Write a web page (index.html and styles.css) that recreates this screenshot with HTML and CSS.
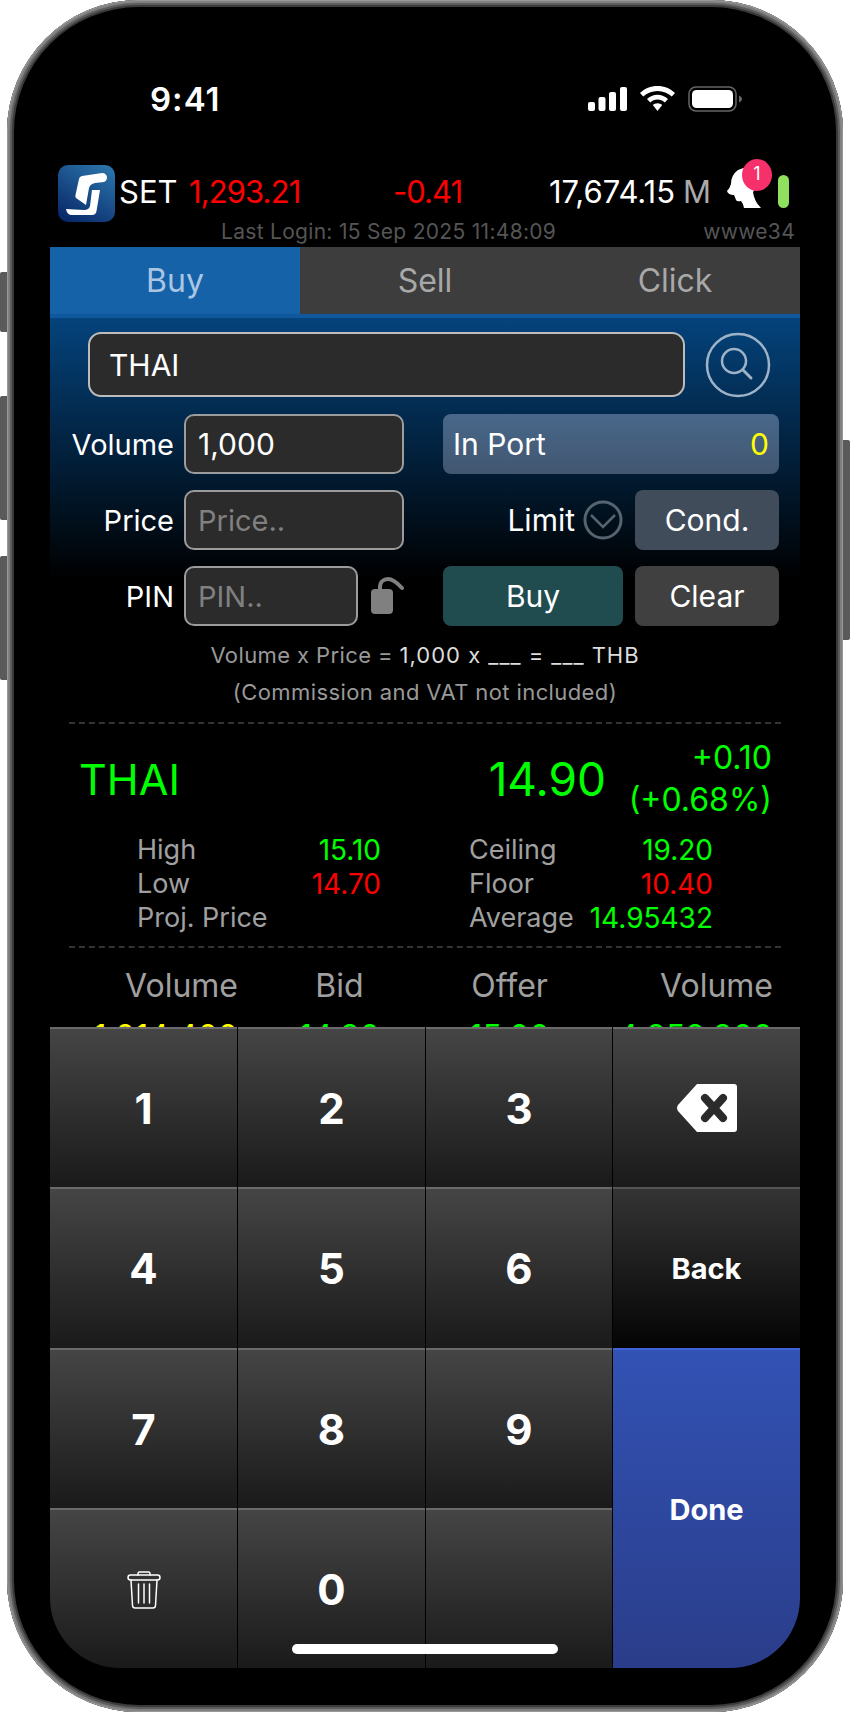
FILE: index.html
```html
<!DOCTYPE html>
<html lang="en">
<head>
  <meta charset="UTF-8">
  <title>Buy - THAI</title>
  <link rel="stylesheet" href="styles.css">
</head>
<body>

<div class="phone">
  <span class="side-btn btn-mute"></span>
  <span class="side-btn btn-up"></span>
  <span class="side-btn btn-down"></span>
  <span class="side-btn btn-power"></span>

  <div class="screen">

    <div class="statusbar">
      <span class="clock">9:41</span>
      <div class="status-icons">
        <svg class="ic-signal" viewBox="0 0 39 24"><rect x="0" y="15" width="7" height="9" rx="2"/><rect x="10.500" y="10" width="7" height="14" rx="2"/><rect x="21" y="5" width="7" height="19" rx="2"/><rect x="32" y="0" width="7" height="24" rx="2"/></svg>
        <svg class="ic-wifi" viewBox="0 0 35 25"><path d="M17.500 0C24.300 0 30.300 2.600 35 7L31.800 10.500C28 7 23 4.900 17.500 4.900S7 7 3.200 10.500L0 7C4.700 2.600 10.700 0 17.500 0Z"/><path d="M17.500 8.800C21.600 8.800 25.200 10.400 28 13L24.800 16.400C22.800 14.600 20.300 13.500 17.500 13.500S12.200 14.600 10.200 16.400L7 13C9.800 10.400 13.400 8.800 17.500 8.800Z"/><path d="M17.500 17.200C19.300 17.200 21 17.900 22.200 19.100L17.500 25L12.800 19.100C14 17.900 15.700 17.200 17.500 17.200Z"/></svg>
        <svg class="ic-battery" viewBox="0 0 54 26"><rect x="1" y="1" width="47" height="24" rx="7" fill="none" stroke="#666" stroke-width="1.500"/><rect x="4" y="4" width="41" height="18" rx="4.500" fill="#fff"/><path d="M51 9.500C53 10.200 54 11.500 54 13S53 15.800 51 16.500Z" fill="#666"/></svg>
      </div>
    </div>

    <div class="ticker">
      <svg class="logo" viewBox="0 0 57 57">
        <defs>
          <linearGradient id="logoBg" x1="0.800" y1="0" x2="0.200" y2="1">
            <stop offset="0" stop-color="#2a72a8"/>
            <stop offset="1" stop-color="#08296a"/>
          </linearGradient>
        </defs>
        <rect width="57" height="57" rx="10" fill="url(#logoBg)"/>
        <path d="M21 14Q21.500 11.500 24 11L44 8Q48 8 49 12Q49 16 46 17L37 18Q32 19 31 23L28 40L18 33Q17 32 17.500 30Z" fill="#fff"/>
        <path d="M34 25H42L38.500 46Q38 50 34 50H14Q9 50 8 44L26 45Q31 45 32 41Z" fill="#fff"/>
      </svg>
      <span class="tk-name">SET</span>
      <span class="tk-index red">1,293.21</span>
      <span class="tk-change red">-0.41</span>
      <span class="tk-value">17,674.15</span>
      <span class="tk-unit">M</span>
      <div class="tk-head">
        <svg viewBox="0 0 38 42"><path d="M1 24Q4 21 5 17Q5 8 12 3L20 0H30L33 8Q34 18 27 25Q28 34 35 41H18Q17 36 15 34Q11 35 10 33Q9 30 8 28Q2 28 1 24Z" fill="#fff"/></svg>
        <span class="badge">1</span>
      </div>
      <span class="tk-pill"></span>
    </div>

    <div class="loginbar">
      <span>Last Login: 15 Sep 2025 11:48:09</span>
      <span>wwwe34</span>
    </div>

    <div class="tabs">
      <div class="tab tab-on">Buy</div>
      <div class="tab">Sell</div>
      <div class="tab">Click</div>
    </div>

    <div class="order">
      <div class="search-row">
        <div class="field field-search">THAI</div>
        <svg class="ic-search" viewBox="0 0 66 66"><circle cx="33" cy="33" r="31" fill="none" stroke="#9fb3c8" stroke-width="2.500"/><circle cx="29" cy="29" r="12" fill="none" stroke="#9fb3c8" stroke-width="2.500"/><path d="M38 38L46 46" stroke="#9fb3c8" stroke-width="3" stroke-linecap="round"/></svg>
      </div>

      <div class="form-row">
        <div class="form-left">
          <label class="form-label">Volume</label>
          <div class="field field-input">1,000</div>
        </div>
        <div class="inport"><span>In Port</span><span class="yellow">0</span></div>
      </div>

      <div class="form-row">
        <div class="form-left">
          <label class="form-label">Price</label>
          <div class="field field-input hint">Price..</div>
        </div>
        <div class="form-right">
          <div class="limit">
            <span>Limit</span>
            <svg class="ic-chevron" viewBox="0 0 40 40"><circle cx="20" cy="20" r="18" fill="none" stroke="#56646f" stroke-width="3"/><path d="M8 15L20 27L32 15" fill="none" stroke="#56646f" stroke-width="2.500"/></svg>
          </div>
          <div class="btn btn-cond">Cond.</div>
        </div>
      </div>

      <div class="form-row">
        <div class="form-left">
          <label class="form-label">PIN</label>
          <div class="field field-pin hint">PIN..</div>
          <svg class="ic-lock" viewBox="0 0 35 37"><rect x="1" y="12" width="22" height="25" rx="4" fill="#808080"/><path d="M10 13V10C10 5 13.500 2 18 2S26 4.500 32 11" fill="none" stroke="#808080" stroke-width="4" stroke-linecap="round"/></svg>
        </div>
        <div class="form-right">
          <div class="btn btn-buy">Buy</div>
          <div class="btn btn-clear">Clear</div>
        </div>
      </div>

      <p class="calc">Volume x Price = <span class="calc-val">1,000 x ___ = ___ THB</span></p>
      <p class="calc calc-note">(Commission and VAT not included)</p>
    </div>

    <div class="quote">
      <div class="quote-main">
        <span class="q-symbol">THAI</span>
        <span class="q-price">14.90</span>
        <span class="q-change">+0.10<br>(+0.68%)</span>
      </div>
      <div class="stats">
        <div class="stat-col">
          <span class="st-label">High</span><span class="st-val green">15.10</span>
          <span class="st-label">Low</span><span class="st-val red">14.70</span>
          <span class="st-label">Proj. Price</span><span class="st-val"></span>
        </div>
        <div class="stat-col">
          <span class="st-label">Ceiling</span><span class="st-val green">19.20</span>
          <span class="st-label">Floor</span><span class="st-val red">10.40</span>
          <span class="st-label">Average</span><span class="st-val green">14.95432</span>
        </div>
      </div>
    </div>

    <div class="book">
      <div class="book-row book-head">
        <span class="b-vol">Volume</span><span class="b-mid">Bid</span><span class="b-mid">Offer</span><span class="b-vol">Volume</span>
      </div>
      <div class="book-row book-first">
        <span class="b-vol yellow">1,014,400</span><span class="b-mid green">14.80</span><span class="b-mid green">15.00</span><span class="b-vol green">4,258,800</span>
      </div>
    </div>

    <div class="keypad">
      <div class="key">1</div>
      <div class="key">2</div>
      <div class="key">3</div>
      <div class="key">
        <svg class="ic-back" viewBox="0 0 62 50"><path d="M21 1H58Q61 1 61 4V46Q61 49 58 49H21L2 28Q0 25 2 22Z" fill="#fff"/><path d="M29 15L47 35M47 15L29 35" stroke="#2b2b2b" stroke-width="8" stroke-linecap="round"/></svg>
      </div>
      <div class="key">4</div>
      <div class="key">5</div>
      <div class="key">6</div>
      <div class="key key-back">Back</div>
      <div class="key">7</div>
      <div class="key">8</div>
      <div class="key">9</div>
      <div class="key key-done">Done</div>
      <div class="key">
        <svg class="ic-trash" viewBox="0 0 34 38" fill="none" stroke="#fff" stroke-width="1.500" stroke-linecap="round" stroke-linejoin="round"><path d="M11 4V2.500Q11 1 12.500 1H21.500Q23 1 23 2.500V4"/><rect x="1" y="4" width="32" height="5" rx="2.500"/><path d="M4 9L5.500 34.500Q5.700 37 8 37H26Q28.300 37 28.500 34.500L30 9"/><path d="M11.500 13V32M17 13V32M22.500 13V32"/></svg>
      </div>
      <div class="key">0</div>
      <div class="key"></div>
    </div>

    <span class="home-bar"></span>
  </div>
</div>

</body>
</html>
```

FILE: styles.css
```css
* {
  box-sizing: border-box;
}

body {
  margin: 0;
  background: #fff;
  font-family: Inter, "Liberation Sans", sans-serif;
  font-weight: 400;
  color: #fff;
}

.red { color: #f00; }
.green { color: #0f0; }
.yellow { color: #ff0; }

.phone {
  position: relative;
  width: 850px;
  height: 1712px;
  padding: 0 50px;
}

.phone::before {
  content: "";
  position: absolute;
  left: 7px;
  right: 7px;
  top: 0;
  bottom: 0;
  border-radius: 132px;
  background: #000;
  box-shadow: inset 0 0 0 1px #999, inset 0 0 0 3px #808080, inset 0 0 0 5px #5c5c5c, inset 0 0 0 7px #3a3a3a;
}

.side-btn {
  position: absolute;
  width: 7px;
  background: #5a5a5a;
  border-radius: 2px 0 0 2px;
}

.btn-mute { left: 0; top: 272px; height: 60px; }
.btn-up { left: 0; top: 396px; height: 124px; }
.btn-down { left: 0; top: 556px; height: 124px; }
.btn-power { right: 0; top: 440px; height: 200px; border-radius: 0 2px 2px 0; }

.screen {
  position: relative;
  height: 1668px;
  border-radius: 0 0 70px 70px;
  overflow: hidden;
}

/* status bar */
.statusbar {
  display: flex;
  align-items: center;
  justify-content: space-between;
  height: 165px;
  padding: 32px 58px 0 100px;
}

.clock {
  font-size: 33px;
  font-weight: 600;
  letter-spacing: 1px;
}

.status-icons {
  display: flex;
  align-items: center;
  gap: 13px;
  fill: #fff;
}

.ic-signal { width: 39px; height: 24px; }
.ic-wifi { width: 35px; height: 25px; }
.ic-battery { width: 54px; height: 26px; }

/* index line */
.ticker {
  display: flex;
  align-items: center;
  height: 57px;
  padding: 0 0 4px 8px;
  font-size: 31px;
}

.logo {
  width: 57px;
  height: 57px;
  flex: none;
  margin-bottom: -4px;
}

.tk-name { margin-left: 4px; width: 70px; }
.tk-index { width: 204px; letter-spacing: -0.9px; }
.tk-change { width: 156px; letter-spacing: -1px; }
.tk-value { width: 134px; }
.tk-unit { width: 43px; color: #aaa; }

.tk-head {
  position: relative;
  width: 38px;
  height: 42px;
  margin-top: -8px;
}

.tk-head svg {
  display: block;
  width: 38px;
  height: 42px;
}

.badge {
  position: absolute;
  left: 16px;
  top: -8px;
  width: 30px;
  height: 32px;
  line-height: 30px;
  border-radius: 50%;
  background: #f5306a;
  font-size: 18px;
  text-align: center;
}

.tk-pill {
  width: 11px;
  height: 33px;
  margin-left: 14px;
  margin-top: -1px;
  border-radius: 6px;
  background: #8fe05f;
}

.loginbar {
  display: flex;
  justify-content: space-between;
  align-items: center;
  height: 25px;
  padding: 0 5px 6px 171px;
  font-size: 21px;
  letter-spacing: 0.3px;
  color: #555;
}

/* tabs */
.tabs {
  display: flex;
  height: 71px;
  border-bottom: 4px solid #10589e;
  background: #3d3d3d;
}

.tab {
  flex: 1;
  text-align: center;
  line-height: 68px;
  font-size: 32px;
  color: #a8a8a8;
}

.tab-on {
  background: #1662a9;
  color: #a9c6e2;
}

/* order form */
.order {
  padding-top: 14px;
  background: linear-gradient(#04437c, #000 262px);
}

.search-row {
  display: flex;
  align-items: center;
  gap: 20px;
  height: 65px;
  padding-left: 38px;
}

.field {
  display: flex;
  align-items: center;
  background: #2b2b2b;
  border: 2px solid #9c9c9c;
  border-radius: 10px;
  font-size: 30px;
  padding-left: 12px;
}

.field-search {
  width: 597px;
  height: 65px;
  padding-left: 19px;
  border-color: #bcbcbc;
  border-radius: 13px;
}

.ic-search { width: 66px; height: 66px; flex: none; }

.field-input { width: 220px; height: 60px; }
.field-pin { width: 174px; height: 60px; }
.hint { color: #808080; font-size: 29px; }

.form-row {
  display: flex;
  justify-content: space-between;
  height: 60px;
  margin-top: 16px;
  padding-right: 21px;
}

.form-row:nth-child(2) { margin-top: 17px; }

.form-left {
  display: flex;
  align-items: center;
  width: 360px;
}

.form-label {
  width: 134px;
  padding-right: 10px;
  text-align: right;
  font-size: 29px;
}

.ic-lock {
  width: 35px;
  height: 37px;
  margin-left: 12px;
  margin-top: -2px;
}

.inport {
  display: flex;
  justify-content: space-between;
  align-items: center;
  width: 336px;
  padding: 0 10px;
  border-radius: 8px;
  background: linear-gradient(#48688b, #42566f);
  font-size: 30px;
}

.form-right {
  display: flex;
  justify-content: flex-end;
  gap: 12px;
  width: 336px;
}

.limit {
  display: flex;
  align-items: center;
  gap: 8px;
  font-size: 30px;
}

.ic-chevron { width: 40px; height: 40px; }

.btn {
  display: flex;
  align-items: center;
  justify-content: center;
  border-radius: 8px;
  font-size: 30px;
}

.btn-cond { width: 144px; background: #414c5a; }
.btn-buy { width: 180px; background: #204c50; }
.btn-clear { width: 144px; background: #404040; }

.calc {
  margin: 13px 0 0;
  text-align: center;
  font-size: 22px;
  letter-spacing: 0.4px;
  line-height: 33px;
  color: #999;
}

.calc-note { margin-top: 4px; }
.calc-val { color: #ddd; letter-spacing: 1px; }

/* quote */
.quote {
  margin: 13px 19px 0;
  padding-top: 1px;
  border-top: 2px dashed #333;
  border-bottom: 2px dashed #333;
  height: 226px;
}

.quote-main {
  display: flex;
  align-items: center;
  height: 100px;
  padding: 8px 9px 0 10px;
  color: #0f0;
}

.q-symbol {
  font-size: 43px;
}

.q-price {
  margin-left: auto;
  font-size: 46px;
}

.q-change {
  width: 166px;
  text-align: right;
  font-size: 32px;
  line-height: 42px;
}

.stats {
  display: flex;
  gap: 88px;
  margin-top: 8px;
  padding-left: 68px;
  font-size: 27px;
  line-height: 34px;
}

.stat-col {
  display: grid;
  grid-template-columns: 1fr auto;
  grid-auto-rows: 34px;
  width: 244px;
}

.st-label { color: #a0a0a0; }
.st-val { text-align: right; font-size: 28px; }

/* order book */
.book {
  height: 79px;
  overflow: hidden;
}

.book-row {
  display: grid;
  grid-template-columns: 188px 203px 137px 195px;
  height: 37px;
  font-size: 32px;
  line-height: 37px;
}

.book-head { margin-top: 19px; color: #a0a0a0; }
.book-first { margin-top: 14px; }

.b-vol { text-align: right; }
.b-mid { text-align: center; }

/* number pad */
.keypad {
  display: grid;
  grid-template-columns: 188px 188px 187px 187px;
  grid-template-rows: 160px 161px 160px 160px;
  background: #000;
}

.key {
  display: flex;
  align-items: center;
  justify-content: center;
  margin-right: 1px;
  border-top: 2px solid #6a6a6a;
  background: linear-gradient(#454545, #1a1a1a);
  font-size: 42px;
  font-weight: 700;
}

.key:nth-child(4n) { margin-right: 0; }

.key-back {
  background: linear-gradient(#343434, #040404);
  border-top-color: #555;
  font-size: 29px;
}

.key-done {
  grid-row: 3 / span 2;
  grid-column: 4;
  border-top-color: #3f63d6;
  background: linear-gradient(#3252b4, #2a3d8a);
  font-size: 29px;
}

.ic-back { width: 62px; height: 50px; }
.ic-trash { width: 34px; height: 38px; margin-top: 2px; }

.home-bar {
  position: absolute;
  left: 242px;
  bottom: 14px;
  width: 266px;
  height: 10px;
  border-radius: 5px;
  background: #fff;
}
```
